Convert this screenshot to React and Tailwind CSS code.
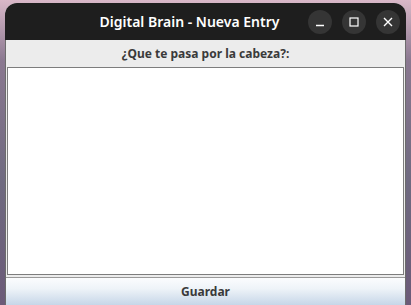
import React, { useState } from "react";

const Ctrl = ({ children }) => (
  <button className="w-[24px] h-[24px] rounded-full bg-[#353535] flex items-center justify-center text-white">
    {children}
  </button>
);

export default function App() {
  const [texto, setTexto] = useState("");

  return (
    <div className="w-[411px] h-[305px] overflow-hidden bg-[linear-gradient(180deg,#d9b8c8_0%,#8a7890_20%,#6f6a80_60%,#6b5a78_100%)] font-['Noto_Sans',sans-serif]">
      {/* WINDOW */}
      <div className="ml-[5px] mt-[3px] w-[401px] h-[302px] rounded-t-[12px] overflow-hidden bg-[#ececec] flex flex-col">
        {/* TITLE BAR */}
        <div className="h-[37px] shrink-0 bg-[#1e1e1e] flex items-center relative">
          <div className="w-full text-center text-white text-[14px] font-semibold pr-[32px]">
            Digital Brain - Nueva Entry
          </div>
          <div className="absolute right-[6px] top-[7px] flex gap-[10px]">
            <Ctrl>
              <svg width="10" height="10" viewBox="0 0 10 10">
                <path d="M1 8.5h8" stroke="white" strokeWidth="1.3" />
              </svg>
            </Ctrl>
            <Ctrl>
              <svg width="10" height="10" viewBox="0 0 10 10">
                <rect x="1" y="1" width="8" height="8" fill="none" stroke="white" strokeWidth="1.2" />
              </svg>
            </Ctrl>
            <Ctrl>
              <svg width="10" height="10" viewBox="0 0 10 10">
                <path d="M1 1L9 9M9 1L1 9" stroke="white" strokeWidth="1.4" />
              </svg>
            </Ctrl>
          </div>
        </div>

        {/* CONTENT */}
        <div className="flex-1 flex flex-col border-l border-r border-[#6c6c6c]">
          <div className="h-[27px] shrink-0 flex items-center justify-center text-[12px] font-bold text-[#3a3a3a] pt-[1px]">
            ¿Que te pasa por la cabeza?:
          </div>
          <textarea
            value={texto}
            onChange={(e) => setTexto(e.target.value)}
            className="mx-[1px] h-[208px] shrink-0 resize-none bg-white border border-[#7d7d7d] outline-none text-[12px] p-1"
          />
          <button className="mt-[2px] flex-1 border-t border-[#9a9a9a] bg-[linear-gradient(180deg,#fbfcfe_0%,#eef3f8_40%,#c6d6e8_100%)] text-[12px] font-bold text-[#3a3a3a]">
            Guardar
          </button>
        </div>
      </div>
    </div>
  );
}
